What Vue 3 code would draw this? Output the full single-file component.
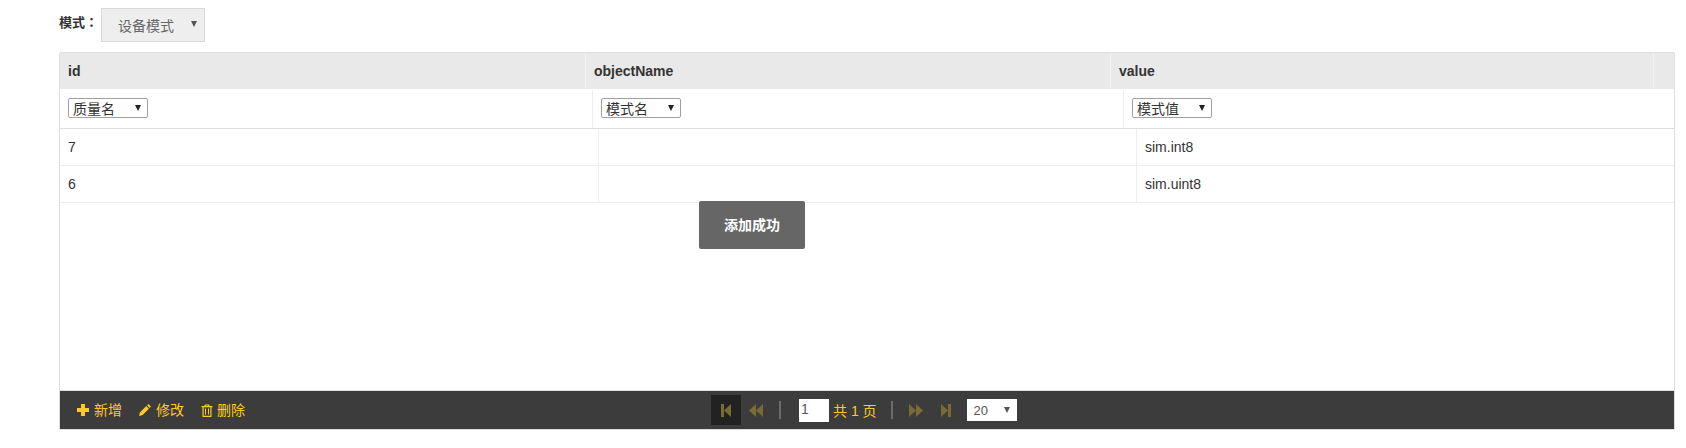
<script setup>
const filters = [
  { key: 'id', cls: 'fcol-1', placeholder: '质量名' },
  { key: 'objectName', cls: 'fcol-2', placeholder: '模式名' },
  { key: 'value', cls: 'fcol-3', placeholder: '模式值' },
];

const rows = [
  { id: '7', objectName: '', value: 'sim.int8' },
  { id: '6', objectName: '', value: 'sim.uint8' },
];
</script>

<template>
  <div class="page">
    <div class="mode-bar">
      <label class="mode-label">模式：</label>
      <div class="mode-select">
        <select class="native">
          <option>设备模式</option>
        </select>
        <span class="arrow"></span>
      </div>
    </div>

    <div class="grid">
      <div class="grid-head">
        <div class="hcol hcol-1">id</div>
        <div class="hcol hcol-2">objectName</div>
        <div class="hcol hcol-3">value</div>
        <div class="hcol hcol-rest"></div>
      </div>

      <div class="grid-filter">
        <div v-for="f in filters" :key="f.key" class="fcol" :class="f.cls">
          <div class="filter-select">
            <select class="native">
              <option>{{ f.placeholder }}</option>
            </select>
            <span class="arrow arrow--dark"></span>
          </div>
        </div>
      </div>

      <div class="grid-body">
        <div v-for="row in rows" :key="row.id" class="row">
          <div class="cell col-1">{{ row.id }}</div>
          <div class="cell col-2">{{ row.objectName }}</div>
          <div class="cell col-3">{{ row.value }}</div>
        </div>
        <div class="toast">添加成功</div>
      </div>

      <div class="grid-foot">
        <div class="actions">
          <a class="action">
            <svg width="12" height="12" viewBox="0 0 12 12"><path d="M4 0h4v4h4v4H8v4H4V8H0V4h4z" fill="#ffc926" /></svg>
            新增
          </a>
          <a class="action">
            <svg width="12" height="12" viewBox="0 0 12 12"><path d="M9.4 0L12 2.6l-1.3 1.3L8.1 1.3zM7.3 2.1l2.6 2.6-6.3 6.4L0 12l.9-3.6z" fill="#ffc926" /></svg>
            修改
          </a>
          <a class="action action--trash">
            <svg width="12" height="13" viewBox="0 0 12 13"><path d="M4 .5h4l.8 1.5h2.700v1.200h-1V13h-9V3.200h-1V2h2.700zm.6 1.500h2.800l-.3-.6H4.900zM2.700 3.200v8.600h6.600V3.200zM4 4.500h1v6H4zm3 0h1v6H7z" fill="#ffc926" fill-rule="evenodd" /></svg>
            删除
          </a>
        </div>

        <div class="pager">
          <button class="page-btn page-btn--active">
            <svg width="10" height="13" viewBox="0 0 10 13"><path d="M0 0h3v13H0zM3 6.500L10 0v13z" fill="#7a6a35" /></svg>
          </button>
          <button class="page-btn">
            <svg width="14" height="13" viewBox="0 0 14 13"><path d="M0 6.500L7 0v13zM7 6.500L14 0v13z" fill="#7a6a35" /></svg>
          </button>
          <span class="sep"></span>
          <input class="page-input" value="1" />
          <span class="page-total">共 1 页</span>
          <span class="sep sep--right"></span>
          <button class="page-btn">
            <svg width="14" height="13" viewBox="0 0 14 13"><path d="M0 0l7 6.500L0 13zM7 0l7 6.500L7 13z" fill="#7a6a35" /></svg>
          </button>
          <button class="page-btn">
            <svg width="10" height="13" viewBox="0 0 10 13"><path d="M0 0l7 6.500L0 13zM7 0h3v13H7z" fill="#7a6a35" /></svg>
          </button>
          <div class="size-select">
            <select class="native">
              <option>20</option>
            </select>
            <span class="arrow"></span>
          </div>
        </div>
      </div>
    </div>
  </div>
</template>

<style>
html,
body {
  margin: 0;
  background: #fff;
}
</style>

<style scoped>
.page {
  padding: 8px 11px 0 59px;
  font-family: "Liberation Sans", "Noto Sans CJK SC", sans-serif;
  font-size: 14px;
  color: #333;
}

.mode-bar {
  display: flex;
  align-items: flex-start;
  height: 34px;
  margin-bottom: 10px;
}

.mode-label {
  width: 42px;
  padding-top: 7px;
  font-family: "Liberation Sans", "Noto Sans CJK TC", sans-serif;
  font-size: 13px;
  line-height: 16px;
  font-weight: 700;
}

.native {
  display: block;
  width: 100%;
  height: 100%;
  margin: 0;
  border: 0;
  border-radius: 0;
  background: transparent;
  appearance: none;
  font: inherit;
  color: inherit;
  outline: none;
}

.arrow {
  position: absolute;
  top: 50%;
  right: 7px;
  margin-top: -3px;
  border-left: 3px solid transparent;
  border-right: 3px solid transparent;
  border-top: 6px solid #555;
  pointer-events: none;
}

.arrow--dark {
  top: 6px;
  right: 6px;
  margin-top: 0;
  border-top-color: #222;
}

.mode-select {
  position: relative;
  width: 104px;
  height: 34px;
  box-sizing: border-box;
  border: 1px solid #d5d8dc;
  background: #eee;
  color: #666;
}

.mode-select .native {
  padding: 2px 16px 0 16px;
}

.mode-select .arrow {
  margin-top: -4px;
}

.grid {
  border: 1px solid #ddd;
  border-radius: 2px 2px 0 0;
}

.grid-head {
  display: flex;
  height: 36px;
  background: #e9e9e9;
  font-weight: 700;
  line-height: 36px;
}

.hcol {
  box-sizing: border-box;
  padding-left: 8px;
  border-right: 1px solid #f3f3f3;
}

.hcol-1 {
  width: 526px;
}

.hcol-2 {
  width: 525px;
}

.hcol-3 {
  width: 543px;
}

.hcol-rest {
  flex: 1;
  border-right: 0;
}

.grid-filter {
  display: flex;
  height: 40px;
  box-sizing: border-box;
  border-top: 1px solid #fff;
  border-bottom: 1px solid #ddd;
}

.fcol {
  box-sizing: border-box;
  padding: 8px 0 0 8px;
  border-right: 1px solid #eee;
}

.fcol-1 {
  width: 533px;
}

.fcol-2 {
  width: 531px;
}

.fcol-3 {
  flex: 1;
  border-right: 0;
}

.filter-select {
  position: relative;
  width: 80px;
  height: 20px;
  box-sizing: border-box;
  border: 1px solid #a0a0a0;
  border-radius: 2px;
}

.filter-select .native {
  padding: 1px 0 0 4px;
}

.grid-body {
  position: relative;
  height: 261px;
}

.row {
  display: flex;
  height: 37px;
  box-sizing: border-box;
  border-bottom: 1px solid #eee;
  line-height: 36px;
}

.cell {
  box-sizing: border-box;
  padding-left: 8px;
  border-right: 1px solid #eee;
}

.col-1 {
  width: 539px;
}

.col-2 {
  width: 538px;
}

.col-3 {
  flex: 1;
  border-right: 0;
}

.toast {
  position: absolute;
  left: 639px;
  top: 72px;
  width: 106px;
  height: 48px;
  border-radius: 2px;
  background: #666;
  color: #fff;
  font-weight: 700;
  line-height: 48px;
  text-align: center;
}

.grid-foot {
  position: relative;
  display: flex;
  align-items: center;
  height: 39px;
  box-sizing: border-box;
  border-top: 1px solid #ddd;
  background: #3c3c3c;
  color: #ffc926;
}

.actions {
  display: flex;
  gap: 17px;
  padding-left: 17px;
}

.action {
  display: flex;
  align-items: center;
  gap: 5px;
  line-height: 16px;
}

.action--trash {
  gap: 4px;
}

.pager {
  position: absolute;
  left: 651px;
  top: 4px;
  display: flex;
  align-items: center;
  height: 30px;
}

.page-btn {
  display: flex;
  align-items: center;
  justify-content: center;
  width: 30px;
  height: 30px;
  padding: 0;
  border: 0;
  background: transparent;
}

.page-btn--active {
  background: #222;
}

.sep {
  width: 2px;
  height: 18px;
  margin: 0 18px 0 8px;
  background: #6b6b6b;
}

.sep--right {
  margin: 0 8px 0 14px;
}

.page-input {
  box-sizing: border-box;
  width: 30px;
  height: 23px;
  padding: 0 0 2px 2px;
  border: 0;
  background: #fff;
  font: inherit;
  color: #555;
  outline: none;
}

.page-total {
  margin-left: 4px;
}

.size-select {
  position: relative;
  width: 50px;
  height: 22px;
  margin-left: 6px;
  background: #fff;
  color: #555;
}

.size-select .native {
  padding-left: 7px;
  font-size: 13px;
}
</style>
